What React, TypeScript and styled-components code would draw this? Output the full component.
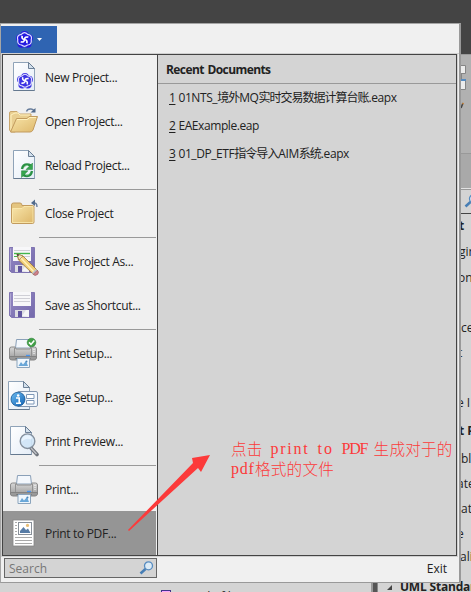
import React from "react";
import styled, { createGlobalStyle } from "styled-components";

const GlobalStyle = createGlobalStyle`
  * { box-sizing: border-box; }
  body { margin: 0; overflow: hidden; font-family: "Open Sans", "Noto Sans CJK SC", sans-serif; font-size: 12px; color: #222; }
  svg { display: block; flex: none; }
`;

const Desktop = styled.div`
  position: relative;
  width: 471px;
  height: 592px;
  overflow: hidden;
  background: #d4d4d4;
  display: flex;
  flex-direction: column;
`;
const TitleBar = styled.div`
  flex: none;
  height: 54px;
  background: #444;
`;
const Ribbon = styled.div`
  flex: none;
  height: 134px;
  padding: 11px 0 0 455px;
  background: linear-gradient(#999 0 1px, #b1b1b1 1px 99px, #999 99px 100px, #a9a9a9 100px);
`;
const SideToolbar = styled.div`
  flex: none;
  height: 26px;
  border-top: 1px solid #e2e2e2;
  border-bottom: 1px solid #444;
  box-shadow: inset 0 1px #999;
  padding: 5px 0 0 464px;
`;
const SideList = styled.div`
  flex: none;
  height: 355px;
  display: flex;
  flex-direction: column;
`;
const SideRow = styled.div<{ $h: number; $left: number; $bold?: boolean }>`
  flex: none;
  height: ${(p) => p.$h}px;
  line-height: ${(p) => p.$h - 2}px;
  padding-left: ${(p) => p.$left}px;
  font-weight: ${(p) => (p.$bold ? 700 : 400)};
  white-space: nowrap;
`;
const BottomRow = styled.div`
  flex: none;
  height: 23px;
  display: flex;
  align-items: flex-start;
`;
const TreeCell = styled.div`
  flex: none;
  width: 371px;
  height: 23px;
  padding: 18px 0 0 161px;
  display: flex;
  gap: 18px;
  line-height: 20px;
  white-space: nowrap;
`;
const Splitter = styled.div`
  flex: none;
  width: 7px;
  height: 23px;
  background: #555;
  border-left: 2px solid #999;
  border-right: 1px solid #888;
`;
const Category = styled.div`
  display: flex;
  align-items: center;
  gap: 8px;
  padding: 10px 0 0 9px;
  line-height: 16px;
  font-weight: 700;
  white-space: nowrap;
  letter-spacing: -0.2px;
`;

const Popup = styled.div`
  position: absolute;
  left: 0;
  top: 23px;
  width: 461px;
  height: 560px;
  display: flex;
  flex-direction: column;
  background: #f0f0f0;
  border: 1px solid #a5a5a5;
  border-right: 2px solid #999;
  border-bottom: 1px solid #999;
`;
const Header = styled.div`
  flex: none;
  height: 30px;
  padding-top: 2px;
  border-bottom: 1px solid #ccc;
`;
const AppButton = styled.div`
  width: 56px;
  height: 27px;
  padding-left: 15px;
  display: flex;
  align-items: center;
  gap: 4px;
  background: #2f64b2;
`;
const Body = styled.div`
  flex: none;
  width: 455px;
  height: 502px;
  margin-left: 1px;
  display: flex;
  border: 1px solid #444;
  box-shadow: 0 0 0 1px #d0d0d0;
`;
const Menu = styled.div`
  width: 155px;
  flex: none;
  border-right: 1px solid #444;
`;
const MenuItem = styled.div<{ $active?: boolean }>`
  width: 153px;
  height: 44px;
  padding-left: 4px;
  display: flex;
  align-items: center;
  gap: 6px;
  white-space: nowrap;
  background: ${(p) => (p.$active ? "#959595" : "transparent")};
`;
const Label = styled.span`
  letter-spacing: -0.32px;
`;
const Separator = styled.div`
  height: 4px;
  width: 117px;
  margin-left: 36px;
  background: linear-gradient(transparent 2px, #999 2px 3px, transparent 3px);
`;
const Recent = styled.div`
  flex: 1;
  background: #d4d4d4;
`;
const RecentTitle = styled.div`
  height: 29px;
  padding: 0 0 0 8px;
  line-height: 30px;
  font-weight: 700;
  border-bottom: 1px solid #999;
  word-spacing: 1px;
  letter-spacing: -0.58px;
`;
const RecentRow = styled.div`
  height: 28px;
  line-height: 28px;
  padding-left: 11px;
  white-space: nowrap;
  letter-spacing: -0.42px;
`;
const Key = styled.span`
  text-decoration: underline;
  text-underline-offset: 2px;
  margin-right: 3px;
`;
const Cjk = styled.span`
  font-family: "Noto Sans CJK SC", sans-serif;
  font-size: 12px;
  line-height: 1;
  letter-spacing: -1px;
`;
const Footer = styled.div`
  flex: 1;
  display: flex;
  justify-content: space-between;
  align-items: flex-start;
  padding: 2px 12px 0 3px;
`;
const SearchBox = styled.div`
  width: 153px;
  height: 20px;
  display: flex;
  justify-content: space-between;
  align-items: center;
  padding: 0 2px 0 4px;
  border: 1px solid #666;
  background: #d4d4d4;
  color: #777;
`;
const Exit = styled.span`
  line-height: 22px;
`;
const Arrow = styled.svg`
  position: absolute;
  left: 127px;
  top: 453px;
`;
const Note = styled.div`
  position: absolute;
  left: 231px;
  top: 438px;
  color: #fc3a3a;
  font: 300 15.6px/20px "Noto Sans CJK SC", sans-serif;
  letter-spacing: 0.2px;
  white-space: nowrap;
`;
const NoteLine = styled.div`
  display: flex;
  height: 20px;
`;
const Latin = styled.span<{ $w: number; $ls: number }>`
  width: ${(p) => p.$w}px;
  font: 400 16px/22px "Liberation Serif", serif;
  letter-spacing: ${(p) => p.$ls}px;
`;
const Gap = styled.span`
  width: 8px;
`;
const Defs = styled.svg`
  position: absolute;
  width: 0;
  height: 0;
`;

const Logo = () => (
  <g>
    <g fill="#2419e0">
      <circle cx="8" cy="3.9" r="3.8" />
      <circle cx="12.1" cy="6.8" r="3.8" />
      <circle cx="10.8" cy="11.9" r="3.8" />
      <circle cx="5.2" cy="11.9" r="3.8" />
      <circle cx="3.9" cy="6.8" r="3.8" />
    </g>
    <path
      d="M5 3.2Q8 -.2 11 3.2Q15.6 4 14.3 8.2Q15 12.8 10.8 13.2Q8 15.6 5.2 13.2Q1 12.8 1.7 8.2Q.4 4 5 3.2Z"
      fill="#2419e0"
      stroke="#dedcff"
      strokeWidth="1.1"
    />
    <path
      d="M8 8Q5 7.6 5.8 4.4M8 8Q8.4 5 11.6 5.8M8 8Q11 8.4 10.2 11.6M8 8Q7.6 11 4.4 10.2"
      fill="none"
      stroke="#fff"
      strokeWidth="1.6"
    />
  </g>
);

const Page = ({ x = 6, y = 1, w = 21, h = 28 }: { x?: number; y?: number; w?: number; h?: number }) => (
  <g transform={`translate(${x + 0.5} ${y + 0.5})`}>
    <path d={`M0 0H${w - 6}L${w} 6V${h}H0Z`} fill="url(#paper)" stroke="#8fa3b8" />
    <path d={`M${w - 6} 0V6H${w}Z`} fill="#d3e0ec" stroke="#60758c" strokeWidth=".9" />
    <path d={`M0 ${h}H${w}`} stroke="#65798f" />
  </g>
);

const Floppy = ({ y, green }: { y: number; green?: boolean }) => (
  <g transform={`translate(2 ${y})`}>
    <path d="M.5.5H25.5V25.5H2.5L.5 23.5Z" fill="url(#violet)" stroke="#8075b2" />
    <path d="M1.5 1.5V23" stroke="#afa7d3" />
    <path d="M4 0H22V14H4Z" fill="#f7f7f9" />
    <path d="M5 3.5H21M5 9.5H21" stroke="#cfcfd6" />
    <path d="M5 6.5H21" stroke={green ? "#42b64b" : "#cfcfd6"} strokeWidth={green ? 1.4 : 1} />
    {green && <path d="M5 9.5H12" stroke="#42b64b" />}
    <path d="M6 18H20V25H6Z" fill="#dddde3" />
    <path d="M9 19H13V25H9Z" fill="#6257a0" />
    <path d="M13 24L17 18H20V25" fill="#fff" opacity=".7" />
  </g>
);

const Printer = ({ dx, dy, check }: { dx: number; dy: number; check?: boolean }) => (
  <g transform={`translate(${dx} ${dy})`}>
    <path d="M7.5 1.5H20.5L21.5 10H6.5Z" fill="#f3f7fc" stroke="#8aa0b8" />
    <path d="M.5 11Q.5 9 2.5 9H6L7 11H21L22 9H25.5Q27.5 9 27.5 11V19H.5Z" fill="url(#steel)" stroke="#8b8b8b" />
    <path d="M5.5 10V18M22.5 10V18" stroke="#929292" />
    <path d="M.5 18.5H27.5V20Q27 22 25 22H3Q.5 22 .5 20Z" fill="#999" stroke="#828282" />
    <path d="M17 17.5H21" stroke="#4794f0" strokeWidth="1.3" />
    <path d="M25 11V16" stroke="#fff" strokeDasharray="1 1" />
    <path d="M6.5 20.5H21.5" stroke="#666" />
    <path d="M8 20.5H20.5V29.5H8Z" fill="#eff6fc" stroke="#8ba4bc" />
    <path d="M9.5 28L12 24L14 26.5L17 23L19 28Z" fill="#69a7d8" />
    <circle cx="17.5" cy="23.5" r="1" fill="#4984b7" />
    {check && (
      <g>
        <circle cx="22.5" cy="4.5" r="4.3" fill="#42a047" stroke="#278034" strokeWidth=".6" />
        <path d="M20 4.4L22 6.4L25.3 2.6" fill="none" stroke="#fff" strokeWidth="1.6" />
      </g>
    )}
  </g>
);

const icons: Record<string, React.ReactNode> = {
  new: (
    <>
      <Page />
      <g transform="translate(10 11.8)" opacity=".88"><Logo /></g>
    </>
  ),
  open: (
    <>
      <path d="M2.5 25V8Q2.5 6.5 4 6.5H10L12 9H24V14L8 27H4Z" fill="#e9cf91" stroke="#c9a66c" />
      <path d="M4 25V10L8 8H11L13 10H23" fill="none" stroke="#fff1bd" />
      <path d="M3.5 27L9.5 13.5H20L22 11.5H30.5L26 25Q25 27 23 27Z" fill="url(#folder)" stroke="#c29b5e" />
      <path d="M10 14.5H20.5L22.5 12.5H29" fill="none" stroke="#fff1bd" />
      <path d="M19.5 6.5Q20.5 3.5 24 4T26.5 7" fill="none" stroke="#687d9b" strokeWidth="1.4" />
      <path d="M23.5 7.5H28.5V3Z" fill="#526b8b" />
    </>
  ),
  reload: (
    <>
      <Page />
      <g fill="none" stroke="#299044" strokeWidth="2.4">
        <path d="M15 20Q16 15.5 20 15.5T24 18M25 22Q24 27 20 27T16 24.5" />
      </g>
      <path d="M25.5 14V20.5H19Z M14.5 28.5V21.8H21Z" fill="#36a64e" stroke="#258340" strokeWidth=".5" />
      <path d="M17 18.5Q18 16 21 16.4M23 24.3Q22 26.5 19 26" fill="none" stroke="#8bd395" strokeWidth=".8" />
    </>
  ),
  close: (
    <>
      <path d="M4.5 25V8Q4.5 6 6.5 6H13Q15 6 15 8.5H25.5Q27 8.5 27 10V25Q27 26.5 25.5 26.5H6Q4.5 26.5 4.5 25Z" fill="#e4c580" stroke="#c29b5e" />
      <path d="M5.5 11.5H15L17 9.5H26V25.5H5.5Z" fill="url(#folder)" stroke="#fff0b8" strokeWidth=".7" />
      <path d="M26 6Q30 5 30 10" fill="none" stroke="#687d9b" strokeWidth="1.4" />
      <path d="M24 6L28 2.5V9Z" fill="#526b8b" />
    </>
  ),
  save: (
    <>
      <Floppy y={2} green />
      <path d="M10 9L11.5 15L27 30L31 26L16 11Z" fill="#f1cf78" stroke="#9b7437" strokeWidth=".8" />
      <path d="M13 12L28 28" stroke="#fff0ba" strokeWidth="1.5" />
      <path d="M10 9L16 11L12 15Z" fill="#f1dfbd" stroke="#9b7437" strokeWidth=".6" />
      <path d="M10 9L12.4 9.8L10.7 11.5Z" fill="#333" />
      <path d="M25 28L29 24L30.5 25.5L26.5 29.5Z" fill="#bcc4c9" />
      <path d="M26.3 29.3L30.3 25.3L31.5 27Q31.5 30 28 30.5Z" fill="#d2828a" stroke="#985e67" strokeWidth=".7" />
    </>
  ),
  shortcut: <Floppy y={3} />,
  setup: <Printer dx={2} dy={1} check />,
  page: (
    <>
      <Page x={1} y={0} w={21} h={28} />
      <rect x="10.5" y="10.5" width="20" height="15" rx="1.5" fill="#f3f7fc" stroke="#8296b0" />
      <path d="M19.5 13.5H27V17.5H19.5ZM19.5 19.5H27V23H19.5Z" fill="#fff" stroke="#7e98b8" />
      <circle cx="11" cy="18.2" r="7" fill="url(#info)" stroke="#195995" strokeWidth=".8" />
      <circle cx="11.2" cy="14.5" r="1.3" fill="#fff" />
      <path d="M9 17H12.2V22H14M9 22.3H14" fill="none" stroke="#fff" strokeWidth="1.6" />
    </>
  ),
  preview: (
    <>
      <Page x={3} y={1} w={21} h={28} />
      <path d="M24 23L30 29.5" stroke="#6f747c" strokeWidth="3.6" strokeLinecap="round" />
      <path d="M24 23L29.5 29" stroke="#c1c3c8" strokeWidth="1.3" />
      <circle cx="20.5" cy="16.2" r="7.3" fill="#cfe4f6" fillOpacity=".9" stroke="#85909d" strokeWidth="1.4" />
      <path d="M15 16.5Q19 12.5 24 14.5Q26 12.5 24 11.3Q18 8.5 15 13.5Z" fill="#eff8ff" opacity=".8" />
    </>
  ),
  print: <Printer dx={3} dy={1} />,
  pdf: (
    <>
      <rect x="6" y="3" width="21" height="26" fill="#fff" stroke="#858585" strokeWidth=".8" />
      <rect x="11.5" y="5.5" width="13" height="12" fill="#fff" stroke="#889099" />
      <path d="M13 16V14L16.5 10L19 13L21 11.5L23.5 16Z" fill="#577ca6" />
      <circle cx="20.5" cy="8.4" r="1.6" fill="#e7bd76" />
      <path d="M8 5.5H10M8 8.5H10M8 11.5H10M8 14.5H10M8 17.5H10M8 20.5H25M8 23.5H25M8 26.5H25" stroke="#aaa" />
    </>
  ),
};

const SearchIcon = () => (
  <svg width="15" height="14" viewBox="0 0 15 14">
    <circle cx="9.5" cy="4.8" r="4" fill="#dcebf6" stroke="#568bc0" strokeWidth="1.3" />
    <path d="M6.5 8L1.5 12.5" stroke="#477eb5" strokeWidth="2.6" />
  </svg>
);

type Entry = { icon: string; label: string; active?: boolean };
const groups: Entry[][] = [
  [{ icon: "new", label: "New Project..." }, { icon: "open", label: "Open Project..." }, { icon: "reload", label: "Reload Project..." }],
  [{ icon: "close", label: "Close Project" }],
  [{ icon: "save", label: "Save Project As..." }, { icon: "shortcut", label: "Save as Shortcut..." }],
  [{ icon: "setup", label: "Print Setup..." }, { icon: "page", label: "Page Setup..." }, { icon: "preview", label: "Print Preview..." }],
  [{ icon: "print", label: "Print..." }, { icon: "pdf", label: "Print to PDF...", active: true }],
];

const sideRows = [
  { h: 25, left: 459, text: "t", bold: true },
  { h: 27, left: 459, text: "gin" },
  { h: 25, left: 458, text: "on" },
  { h: 25, left: 461, text: "" },
  { h: 25, left: 461, text: "ce" },
  { h: 25, left: 458, text: "t" },
  { h: 25, left: 461, text: "" },
  { h: 25, left: 457, text: "e I" },
  { h: 31, left: 459, text: "t P", bold: true },
  { h: 25, left: 461, text: "bl" },
  { h: 25, left: 457, text: "ate" },
  { h: 25, left: 461, text: "at" },
  { h: 25, left: 457, text: "e" },
  { h: 22, left: 460, text: "aliz" },
];

export default function App() {
  return (
    <Desktop>
      <GlobalStyle />
      <Defs>
        <defs>
          <linearGradient id="paper" x2="1" y2="1"><stop stopColor="#fff" /><stop offset="1" stopColor="#e4edf7" /></linearGradient>
          <linearGradient id="violet" x2="1" y2="1"><stop stopColor="#9489c3" /><stop offset="1" stopColor="#7469ac" /></linearGradient>
          <linearGradient id="steel" x2="0" y2="1"><stop stopColor="#d8d8d8" /><stop offset="1" stopColor="#a6a6a6" /></linearGradient>
          <linearGradient id="folder" x2="1" y2="1"><stop stopColor="#f8e5aa" /><stop offset="1" stopColor="#deb86b" /></linearGradient>
          <linearGradient id="info" x2="1" y2="1"><stop stopColor="#6bbbf0" /><stop offset="1" stopColor="#1263b6" /></linearGradient>
        </defs>
      </Defs>
      <TitleBar />
      <Ribbon>
        <svg width="16" height="50" viewBox="0 0 16 50">
          <path d="M0 .5H10.5V8.5H0M0 15.5H10.5V24.5H0" fill="#ececec" stroke="#858585" />
          <path d="M6.5 9V15" stroke="#858585" />
          <path d="M0 15H11" stroke="#568bc0" strokeWidth="2" />
          <path d="M6 43L8 38" stroke="#444" strokeWidth="1.6" />
          <path d="M7.5 39L8.5 38" stroke="#dc8b36" strokeWidth="1.3" />
        </svg>
      </Ribbon>
      <SideToolbar><SearchIcon /></SideToolbar>
      <SideList>
        {sideRows.map((r, i) => (
          <SideRow key={i} $h={r.h} $left={r.left} $bold={r.bold}>{r.text}</SideRow>
        ))}
      </SideList>
      <BottomRow>
        <TreeCell>
          <svg width="10" height="11" viewBox="0 0 10 11"><rect x=".5" y="3.5" width="9" height="7" fill="#f6a6fb" stroke="#44338a" /></svg>
          <span>audit file</span>
        </TreeCell>
        <Splitter />
        <Category>
          <svg width="5" height="5" viewBox="0 0 5 5"><path d="M5 0V5H0Z" fill="#444" /></svg>
          UML Standard
        </Category>
      </BottomRow>

      <Popup>
        <Header>
          <AppButton>
            <svg width="17" height="17" viewBox="0 0 16 16"><Logo /></svg>
            <svg width="5" height="3" viewBox="0 0 5 3"><path d="M0 0H5L2.5 3Z" fill="#fff" /></svg>
          </AppButton>
        </Header>
        <Body>
          <Menu>
            {groups.map((group, i) => (
              <React.Fragment key={i}>
                {i > 0 && <Separator />}
                {group.map((item) => (
                  <MenuItem key={item.label} $active={item.active}>
                    <svg width="32" height="32" viewBox="0 0 32 32">{icons[item.icon]}</svg>
                    <Label>{item.label}</Label>
                  </MenuItem>
                ))}
              </React.Fragment>
            ))}
          </Menu>
          <Recent>
            <RecentTitle>Recent Documents</RecentTitle>
            <RecentRow><Key>1</Key>01NTS_<Cjk>境外</Cjk>MQ<Cjk>实时交易数据计算台账</Cjk>.eapx</RecentRow>
            <RecentRow><Key>2</Key>EAExample.eap</RecentRow>
            <RecentRow><Key>3</Key>01_DP_ETF<Cjk>指令导入</Cjk>AIM<Cjk>系统</Cjk>.eapx</RecentRow>
          </Recent>
        </Body>
        <Footer>
          <SearchBox><span>Search</span><SearchIcon /></SearchBox>
          <Exit>Exit</Exit>
        </Footer>
      </Popup>

      <Arrow width="85" height="80" viewBox="0 0 85 80">
        <path d="M1 77L66 10L65 5L83 2L74 19L71 15L2 78Z" fill="#fc3a3a" />
      </Arrow>
      <Note>
        <NoteLine>
          点击<Gap /><Latin $w={39} $ls={1.7}>print</Latin><Gap /><Latin $w={16} $ls={2}>to</Latin><Gap /><Latin $w={24} $ls={-1.3}>PDF</Latin><Gap />生成对于的
        </NoteLine>
        <NoteLine>
          <Latin $w={24} $ls={0.8}>pdf</Latin>格式的文件
        </NoteLine>
      </Note>
    </Desktop>
  );
}
